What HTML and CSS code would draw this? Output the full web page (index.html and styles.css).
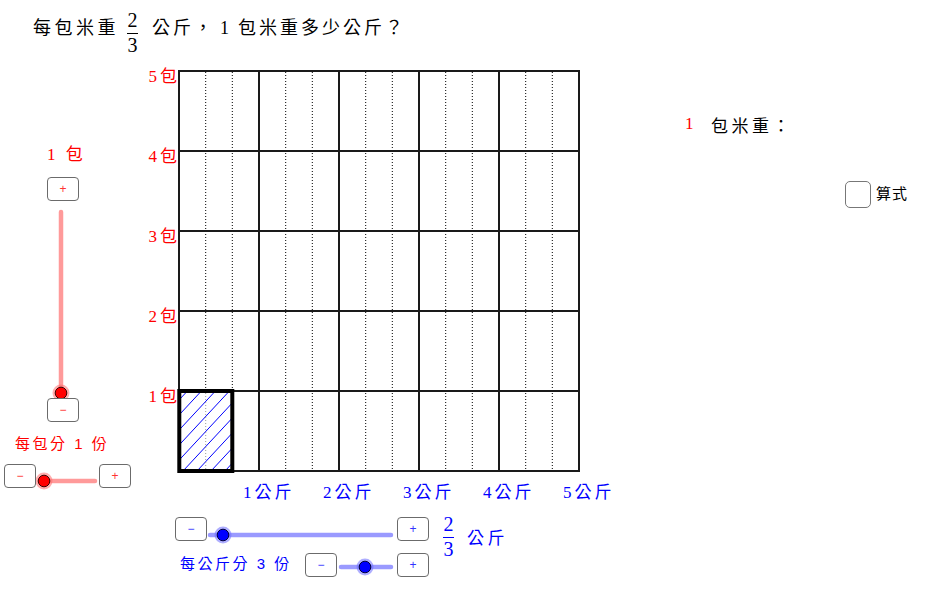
FILE: index.html
```html
<!DOCTYPE html>
<html lang="zh-Hant">
<head>
<meta charset="utf-8">
<title>每包米重</title>
<link rel="stylesheet" href="styles.css">
</head>
<body>
<div class="canvas">
  <svg class="board" width="940" height="600" viewBox="0 0 940 600" xmlns="http://www.w3.org/2000/svg">
    <defs>
      <clipPath id="hatchClip"><rect x="179.3" y="391" width="53" height="80"/></clipPath>
    </defs>
    <!-- dotted third lines -->
    <g stroke="#000" stroke-width="1" stroke-dasharray="1 2" fill="none">
      <line x1="205.7" y1="72" x2="205.7" y2="470"/>
      <line x1="232.3" y1="72" x2="232.3" y2="470"/>
      <line x1="285.7" y1="72" x2="285.7" y2="470"/>
      <line x1="312.3" y1="72" x2="312.3" y2="470"/>
      <line x1="365.7" y1="72" x2="365.7" y2="470"/>
      <line x1="392.3" y1="72" x2="392.3" y2="470"/>
      <line x1="445.7" y1="72" x2="445.7" y2="470"/>
      <line x1="472.3" y1="72" x2="472.3" y2="470"/>
      <line x1="525.7" y1="72" x2="525.7" y2="470"/>
      <line x1="552.3" y1="72" x2="552.3" y2="470"/>
    </g>
    <!-- main grid -->
    <g stroke="#1a1a1a" stroke-width="2" fill="none">
      <rect x="179" y="71" width="400" height="400"/>
      <line x1="259" y1="71" x2="259" y2="471"/>
      <line x1="339" y1="71" x2="339" y2="471"/>
      <line x1="419" y1="71" x2="419" y2="471"/>
      <line x1="499" y1="71" x2="499" y2="471"/>
      <line x1="179" y1="151" x2="579" y2="151"/>
      <line x1="179" y1="231" x2="579" y2="231"/>
      <line x1="179" y1="311" x2="579" y2="311"/>
      <line x1="179" y1="391" x2="579" y2="391"/>
    </g>
    <!-- hatched part -->
    <rect x="179.3" y="391" width="53" height="80" fill="#fff"/>
    <g clip-path="url(#hatchClip)" stroke="#0000ff" stroke-width="1">
      <line x1="99" y1="471" x2="192" y2="371"/>
      <line x1="113" y1="471" x2="206" y2="371"/>
      <line x1="127" y1="471" x2="220" y2="371"/>
      <line x1="141" y1="471" x2="234" y2="371"/>
      <line x1="155" y1="471" x2="248" y2="371"/>
      <line x1="169" y1="471" x2="262" y2="371"/>
      <line x1="183" y1="471" x2="276" y2="371"/>
      <line x1="197" y1="471" x2="290" y2="371"/>
      <line x1="211" y1="471" x2="304" y2="371"/>
      <line x1="225" y1="471" x2="318" y2="371"/>
    </g>
    <g stroke="#9a9a9a" stroke-width="1" stroke-dasharray="1 2">
      <line x1="205.7" y1="393" x2="205.7" y2="469"/>
    </g>
    <rect x="179.3" y="391" width="53" height="80" fill="none" stroke="#000" stroke-width="4"/>

    <!-- red sliders -->
    <g stroke="#ff9a9a" stroke-width="4.5" stroke-linecap="round">
      <line x1="61" y1="212" x2="61" y2="393"/>
      <line x1="40" y1="481" x2="95" y2="481"/>
    </g>
    <circle cx="61" cy="393" r="8.5" fill="#ff6b6b" opacity="0.55"/>
    <circle cx="61" cy="393" r="5.8" fill="#ff0000" stroke="#3a0000" stroke-width="1"/>
    <circle cx="44" cy="481" r="8.5" fill="#ff6b6b" opacity="0.55"/>
    <circle cx="44" cy="481" r="5.8" fill="#ff0000" stroke="#3a0000" stroke-width="1"/>

    <!-- blue sliders -->
    <g stroke="#9a9aff" stroke-width="4.5" stroke-linecap="round">
      <line x1="210" y1="535" x2="391" y2="535"/>
      <line x1="341" y1="567" x2="391" y2="567"/>
    </g>
    <circle cx="223" cy="535" r="8.5" fill="#6b6bff" opacity="0.55"/>
    <circle cx="223" cy="535" r="5.8" fill="#0000ff" stroke="#00003a" stroke-width="1"/>
    <circle cx="365" cy="567" r="8.5" fill="#6b6bff" opacity="0.55"/>
    <circle cx="365" cy="567" r="5.8" fill="#0000ff" stroke="#00003a" stroke-width="1"/>
  </svg>

  <div class="title">
    <span class="t1">每包米重</span>
    <span class="frac frac-title"><span class="num">2</span><span class="bar"></span><span class="den">3</span></span>
    <span class="t2">公斤，<span class="n1">1</span>包米重多少公斤？</span>
  </div>

  <div class="ylabels">
    <span class="ylab">5包</span>
    <span class="ylab">4包</span>
    <span class="ylab">3包</span>
    <span class="ylab">2包</span>
    <span class="ylab">1包</span>
  </div>

  <div class="xlabels">
    <span class="xlab">1公斤</span>
    <span class="xlab">2公斤</span>
    <span class="xlab">3公斤</span>
    <span class="xlab">4公斤</span>
    <span class="xlab">5公斤</span>
  </div>

  <span class="pack-label">1 包</span>
  <span class="split-red">每包分 <span class="sd">1</span> 份</span>
  <span class="split-blue">每公斤分 <span class="sd">3</span> 份</span>

  <span class="frac frac-bottom"><span class="num">2</span><span class="bar"></span><span class="den">3</span></span>
  <span class="kg-unit">公斤</span>

  <span class="ans-num">1</span>
  <span class="ans-text">包米重：</span>

  <span class="check"></span>
  <span class="check-label">算式</span>

  <span class="btn red b-r-plus">+</span>
  <span class="btn red b-r-minus">−</span>
  <span class="btn red b-rh-minus">−</span>
  <span class="btn red b-rh-plus">+</span>
  <span class="btn blue b-b-minus">−</span>
  <span class="btn blue b-b-plus">+</span>
  <span class="btn blue b-b2-minus">−</span>
  <span class="btn blue b-b2-plus">+</span>
</div>
</body>
</html>
```
FILE: styles.css
```css
html, body {
  margin: 0;
  padding: 0;
  background: #fff;
}

body {
  font-family: "Liberation Serif", "Noto Sans CJK TC", serif;
  color: #000;
}

.canvas {
  position: relative;
  width: 940px;
  height: 600px;
  overflow: hidden;
  background: #fff;
}

.board {
  position: absolute;
  left: 0;
  top: 0;
}

/* title */
.title {
  position: absolute;
  left: 33px;
  top: 0;
  display: flex;
  align-items: flex-start;
  font-size: 18px;
  white-space: nowrap;
}

.t1, .t2 {
  line-height: 18px;
  letter-spacing: 3.5px;
  margin-top: 19px;
}

.t2 {
  margin-left: 14px;
  letter-spacing: 3px;
}

.t2 .n1 {
  margin-left: 5px;
  margin-right: 6px;
}

.frac {
  display: flex;
  flex-direction: column;
  align-items: center;
  font-family: "Liberation Serif", serif;
  font-size: 20px;
}

.frac .num,
.frac .den {
  line-height: 20px;
}

.frac .bar {
  width: 11px;
  height: 1px;
  background: currentColor;
  margin-top: 2.5px;
  margin-bottom: 1.5px;
}

.frac-title {
  margin-top: 10px;
  margin-left: 8px;
}

.frac-bottom {
  position: absolute;
  left: 443px;
  top: 514px;
  color: #0000ff;
}

/* axis labels */
.ylabels {
  position: absolute;
  left: 127px;
  top: 68px;
  width: 50px;
  display: flex;
  flex-direction: column;
  align-items: flex-end;
  gap: 62px;
  color: #ff0000;
  font-size: 17px;
}

.ylab {
  line-height: 18px;
  letter-spacing: 3px;
  margin-right: -3px;
}

.xlabels {
  position: absolute;
  left: 243px;
  top: 484px;
  display: flex;
  color: #0000ff;
  font-size: 17px;
}

.xlab {
  width: 80px;
  line-height: 18px;
  letter-spacing: 3px;
}

/* slider labels */
.pack-label {
  position: absolute;
  left: 47px;
  top: 146px;
  color: #ff0000;
  font-size: 17px;
  line-height: 18px;
  letter-spacing: 3px;
}

.split-red,
.split-blue {
  position: absolute;
  font-family: "Liberation Sans", "Noto Sans CJK TC", sans-serif;
  font-size: 15px;
  line-height: 16px;
  letter-spacing: 2.5px;
  white-space: nowrap;
}

.split-red {
  left: 15px;
  top: 436px;
  color: #ff0000;
}

.split-blue {
  left: 180px;
  top: 556px;
  color: #0000ff;
}

.kg-unit {
  position: absolute;
  left: 467px;
  top: 530px;
  color: #0000ff;
  font-size: 17px;
  line-height: 18px;
  letter-spacing: 3.5px;
}

/* answer area */
.ans-num {
  position: absolute;
  left: 685px;
  top: 115px;
  color: #ff0000;
  font-size: 17px;
  line-height: 18px;
}

.ans-text {
  position: absolute;
  left: 711px;
  top: 118px;
  font-size: 17px;
  line-height: 18px;
  letter-spacing: 3.5px;
}

.check {
  position: absolute;
  left: 845px;
  top: 181px;
  width: 26px;
  height: 27px;
  box-sizing: border-box;
  border: 1.5px solid #777;
  border-radius: 5px;
  background: #fff;
}

.check-label {
  position: absolute;
  left: 876px;
  top: 186px;
  font-size: 15px;
  line-height: 16px;
  letter-spacing: 1px;
}

/* slider buttons */
.btn {
  position: absolute;
  width: 32px;
  height: 24px;
  box-sizing: border-box;
  border: 1.5px solid #6b6b6b;
  border-radius: 4px;
  background: #fff;
  display: flex;
  align-items: center;
  justify-content: center;
  font-family: "Liberation Sans", sans-serif;
  font-size: 12px;
  line-height: 1;
}

.btn.red { color: #ff3333; }
.btn.blue { color: #3333ff; }

.b-r-plus { left: 47px; top: 177px; }
.b-r-minus { left: 47px; top: 398px; }
.b-rh-minus { left: 4px; top: 464px; }
.b-rh-plus { left: 99px; top: 464px; }
.b-b-minus { left: 175px; top: 517px; }
.b-b-plus { left: 397px; top: 517px; }
.b-b2-minus { left: 305px; top: 553px; }
.b-b2-plus { left: 397px; top: 553px; }
```
